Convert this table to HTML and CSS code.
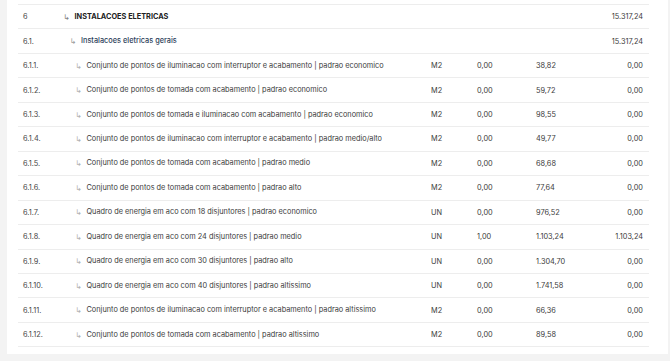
FILE: index.html
```html
<!DOCTYPE html>
<html lang="pt">
<head>
<meta charset="utf-8">
<title>Orçamento</title>
<link rel="stylesheet" href="styles.css">
</head>
<body>
<div class="page">
  <div class="card">
    <table class="budget">
      <colgroup>
        <col class="c-code"><col class="c-desc"><col class="c-unit"><col class="c-qty"><col class="c-price"><col class="c-total">
      </colgroup>
      <tbody>
        <tr class="lvl0">
          <td class="code">6</td>
          <td class="desc"><span class="arr">↳</span><span class="txt strong">INSTALACOES ELETRICAS</span></td>
          <td></td><td></td><td></td>
          <td class="total">15.317,24</td>
        </tr>
        <tr class="lvl1">
          <td class="code">6.1.</td>
          <td class="desc"><span class="arr">↳</span><span class="txt group">Instalacoes eletricas gerais</span></td>
          <td></td><td></td><td></td>
          <td class="total">15.317,24</td>
        </tr>
        <tr class="lvl2">
          <td class="code">6.1.1.</td>
          <td class="desc"><span class="arr">↳</span><span class="txt">Conjunto de pontos de iluminacao com interruptor e acabamento | padrao economico</span></td>
          <td>M2</td><td>0,00</td><td>38,82</td><td class="total">0,00</td>
        </tr>
        <tr class="lvl2">
          <td class="code">6.1.2.</td>
          <td class="desc"><span class="arr">↳</span><span class="txt">Conjunto de pontos de tomada com acabamento | padrao economico</span></td>
          <td>M2</td><td>0,00</td><td>59,72</td><td class="total">0,00</td>
        </tr>
        <tr class="lvl2">
          <td class="code">6.1.3.</td>
          <td class="desc"><span class="arr">↳</span><span class="txt">Conjunto de pontos de tomada e iluminacao com acabamento | padrao economico</span></td>
          <td>M2</td><td>0,00</td><td>98,55</td><td class="total">0,00</td>
        </tr>
        <tr class="lvl2">
          <td class="code">6.1.4.</td>
          <td class="desc"><span class="arr">↳</span><span class="txt">Conjunto de pontos de iluminacao com interruptor e acabamento | padrao medio/alto</span></td>
          <td>M2</td><td>0,00</td><td>49,77</td><td class="total">0,00</td>
        </tr>
        <tr class="lvl2">
          <td class="code">6.1.5.</td>
          <td class="desc"><span class="arr">↳</span><span class="txt">Conjunto de pontos de tomada com acabamento | padrao medio</span></td>
          <td>M2</td><td>0,00</td><td>68,68</td><td class="total">0,00</td>
        </tr>
        <tr class="lvl2">
          <td class="code">6.1.6.</td>
          <td class="desc"><span class="arr">↳</span><span class="txt">Conjunto de pontos de tomada com acabamento | padrao alto</span></td>
          <td>M2</td><td>0,00</td><td>77,64</td><td class="total">0,00</td>
        </tr>
        <tr class="lvl2">
          <td class="code">6.1.7.</td>
          <td class="desc"><span class="arr">↳</span><span class="txt">Quadro de energia em aco com 18 disjuntores | padrao economico</span></td>
          <td>UN</td><td>0,00</td><td>976,52</td><td class="total">0,00</td>
        </tr>
        <tr class="lvl2">
          <td class="code">6.1.8.</td>
          <td class="desc"><span class="arr">↳</span><span class="txt">Quadro de energia em aco com 24 disjuntores | padrao medio</span></td>
          <td>UN</td><td>1,00</td><td>1.103,24</td><td class="total">1.103,24</td>
        </tr>
        <tr class="lvl2">
          <td class="code">6.1.9.</td>
          <td class="desc"><span class="arr">↳</span><span class="txt">Quadro de energia em aco com 30 disjuntores | padrao alto</span></td>
          <td>UN</td><td>0,00</td><td>1.304,70</td><td class="total">0,00</td>
        </tr>
        <tr class="lvl2">
          <td class="code">6.1.10.</td>
          <td class="desc"><span class="arr">↳</span><span class="txt">Quadro de energia em aco com 40 disjuntores | padrao altissimo</span></td>
          <td>UN</td><td>0,00</td><td>1.741,58</td><td class="total">0,00</td>
        </tr>
        <tr class="lvl2">
          <td class="code">6.1.11.</td>
          <td class="desc"><span class="arr">↳</span><span class="txt">Conjunto de pontos de iluminacao com interruptor e acabamento | padrao altissimo</span></td>
          <td>M2</td><td>0,00</td><td>66,36</td><td class="total">0,00</td>
        </tr>
        <tr class="lvl2">
          <td class="code">6.1.12.</td>
          <td class="desc"><span class="arr">↳</span><span class="txt">Conjunto de pontos de tomada com acabamento | padrao altissimo</span></td>
          <td>M2</td><td>0,00</td><td>89,58</td><td class="total">0,00</td>
        </tr>
      </tbody>
    </table>
  </div>
</div>
</body>
</html>
```

FILE: styles.css
```css
* { box-sizing: border-box; }
html, body {
  margin: 0;
  padding: 0;
  height: 100%;
  overflow: hidden;
  background: #f3f3f3;
}
body {
  font-family: Inter, "Noto Sans", sans-serif;
  font-size: 7.35px;
  color: #333;
}
.page {
  height: 361px;
  padding: 0 2px 0 7px;
  overflow: hidden;
}
.card {
  background: #fff;
  height: 354px;
  padding: 4px 20px 0 11px;
  overflow: hidden;
}
.budget {
  width: 631px;
  border-collapse: collapse;
  table-layout: fixed;
  border-top: 1px solid #ededed;
}
.c-code { width: 40px; }
.c-desc { width: 368px; }
.c-unit { width: 46px; }
.c-qty { width: 59px; }
.c-price { width: 59px; }
.c-total { width: 59px; }
.budget td {
  height: 24.46px;
  padding: 1px 0 0 5px;
  border-bottom: 1px solid #ededed;
  white-space: nowrap;
  vertical-align: middle;
  color: #3a3a3a;
  line-height: 10px;
}
.budget td.code { color: #444; }
.budget td.total {
  text-align: right;
  padding: 1px 6px 0 0;
}
.desc .arr {
  display: inline-block;
  width: 11.5px;
  font-family: "DejaVu Sans", sans-serif;
  font-size: 8px;
  color: #b0b0b0;
  vertical-align: -1px;
}
.lvl0 .arr { color: #808080; }
.lvl1 .arr { color: #9a9a9a; }
.lvl1 .desc { padding-left: 11.5px; }
.lvl2 .desc { padding-left: 17px; }
.txt.strong {
  font-weight: 700;
  color: #222;
}
.txt.group {
  font-weight: 500;
  color: #2c3e5a;
}
```
